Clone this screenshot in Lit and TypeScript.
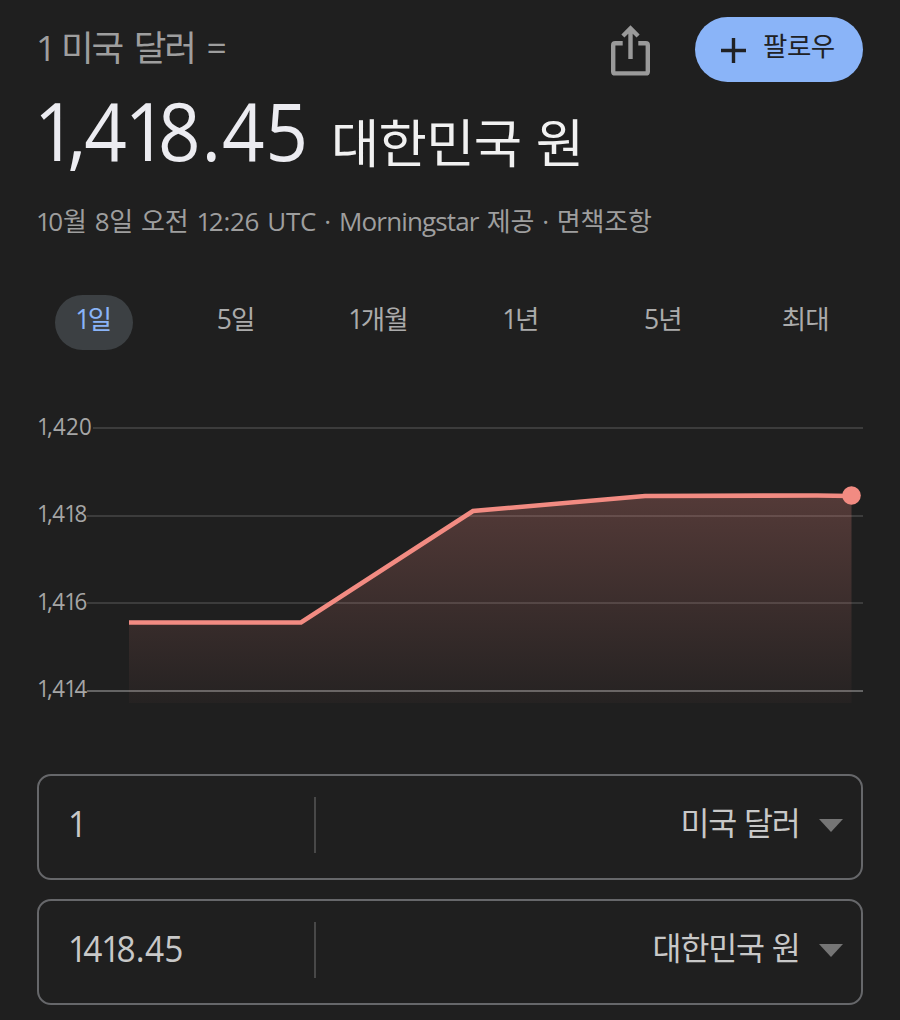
import { LitElement, html, css } from "lit";
import { customElement } from "lit/decorators.js";

/** Tightens each figure 1, and the character set directly before it. */
const fig = (s: string) =>
  s.split(/([0-9,](?=1)|1)/).filter((p) => p !== "").map((p) =>
    p === "1" ? html`<span class="one">1</span>` : /^[0-9,]$/.test(p) ? html`<span class="pre">${p}</span>` : p);

@customElement("app-root")
class AppRoot extends LitElement {
  static styles = css`
    :host {
      display: block;
      width: 900px;
      height: 1020px;
      box-sizing: border-box;
      padding: 17px 37px 0;
      overflow: hidden;
      background: #1f1f1f;
      color: #9e9e9e;
      font-family: "Open Sans", "Noto Sans CJK KR", sans-serif;
      white-space: nowrap;
    }
    .one { letter-spacing: -0.12em; }
    .pre { letter-spacing: -0.03em; }
    .top { display: flex; height: 65px; align-items: flex-start; }
    .from { flex: 1; font-size: 35.5px; line-height: 61px; letter-spacing: -2.3px; word-spacing: 5px; text-indent: -1px; }
    .from .one { letter-spacing: -0.2em; }
    .share { display: block; width: 40px; height: 54px; margin: 7px 45px 0 0; overflow: visible; }
    .follow {
      display: flex; box-sizing: border-box; width: 168.5px; height: 64.5px; border: 0; padding: 0 0 0 26.5px;
      border-radius: 33px; background: #8ab4f8; color: #202124;
      font: 26.5px/59px "Open Sans", "Noto Sans CJK KR", sans-serif; letter-spacing: -0.5px;
    }
    .follow svg { width: 25px; height: 25px; margin: 20.5px 17px 0 0; }
    .rate { height: 100px; display: flex; align-items: flex-start; color: #e8eaed; line-height: 96px; }
    .num { font-size: 80.5px; color: #ececf1; margin-left: -3px; width: 273px; letter-spacing: 1px; transform: scaleX(0.925); transform-origin: 0 0; }
    .num .one { letter-spacing: -0.125em; }
    .unit { font-size: 52.5px; line-height: 121px; margin-left: 24px; letter-spacing: -0.7px; word-spacing: 1.5px; color: #f1f1f1; }
    .meta { height: 50px; margin-top: 14px; font-size: 26px; line-height: 51px; letter-spacing: -0.25px; word-spacing: 1.6px; text-indent: -1px; }
    .meta .one { letter-spacing: -0.1em; }
    .src { letter-spacing: -0.85px; }
    .tabs { display: grid; grid-template-columns: repeat(6, 142.4px); margin: 48.5px -14.5px 0; height: 55.5px; }
    .tab { justify-self: center; box-sizing: border-box; width: 78px; text-align: center; font-size: 26.5px; line-height: 49px; letter-spacing: -0.9px; text-indent: -1px; color: #ababab; }
    .tab .one { letter-spacing: -0.1em; }
    .on { border-radius: 28px; background: #3c4043; color: #8ab4f8; height: 55.5px; }
    .chart { position: relative; height: 350px; margin-top: 51.5px; }
    .row { display: flex; height: 87.6px; font-size: 24px; line-height: 47px; color: #a6a6a6; letter-spacing: 0.2px; }
    .lab { transform: scaleX(0.93); transform-origin: 0 0; margin: 0 -4px 0 -0.5px; }
    .rule { flex: 1; height: 2px; margin: 25.5px 0 0 1.5px; background: #3c3c3c; }
    .row:last-of-type .rule { background: #646464; }
    .plot { position: absolute; left: 0; top: 0; width: 826px; height: 320px; overflow: visible; }
    .box {
      display: flex; box-sizing: border-box; height: 106px; border: 2px solid #66676a;
      border-radius: 14px; margin-bottom: 19px; color: #c8c8c8;
    }
    .val { width: 275px; box-sizing: border-box; padding-left: 29px; font-size: 36px; line-height: 96px; letter-spacing: 0.3px; }
    .fit { display: inline-block; transform: scaleX(0.93); transform-origin: 0 0; }
    .sep { width: 2px; height: 56px; margin-top: 21px; background: #484848; }
    .cur { flex: 1; text-align: right; font-size: 31.5px; line-height: 93px; letter-spacing: -1.2px; word-spacing: 1px; }
    .tri { width: 24px; height: 13px; margin: 43px 18px 0 19.5px; }
    .boxes { margin-top: 22.5px; }
  `;

  render() {
    return html`
      <div class="top">
        <div class="from">${fig("1 미국 달러 =")}</div>
        <svg class="share" viewBox="0 0 40 54" fill="none" stroke="#9a9a9a" stroke-width="4.4">
          <path d="M12.7 19.2H5.2Q3.2 19.2 3.2 21.2V47.4Q3.2 49.4 5.2 49.4H35.8Q37.8 49.4 37.8 47.4V21.2Q37.8 19.2 35.8 19.2H28.3" />
          <path d="M20.5 35V5M12.9 12L20.5 4.4L28.1 12" />
        </svg>
        <button class="follow">
          <svg viewBox="0 0 25 25"><path d="M12.5 0V25M0 12.5H25" stroke="#202124" stroke-width="3.4" /></svg>
          팔로우
        </button>
      </div>
      <div class="rate"><span class="num">${fig("1,418.45")}</span><span class="unit">대한민국 원</span></div>
      <div class="meta">${fig("10월 8일 오전 12:26 UTC · ")}<span class="src">Morningstar</span> 제공 · 면책조항</div>
      <div class="tabs">
        ${["1일", "5일", "1개월", "1년", "5년", "최대"].map(
          (t, i) => html`<div class="tab ${i === 0 ? "on" : ""}">${fig(t)}</div>`
        )}
      </div>
      <div class="chart">
        ${["1,420", "1,418", "1,416", "1,414"].map(
          (t) => html`<div class="row"><span class="lab">${fig(t)}</span><div class="rule"></div></div>`
        )}
        <svg class="plot" viewBox="37 402.5 826 320">
          <defs>
            <linearGradient id="g" x1="0" y1="496" x2="0" y2="703" gradientUnits="userSpaceOnUse">
              <stop offset="0" stop-color="#f28b82" stop-opacity="0.25" />
              <stop offset="1" stop-color="#f28b82" stop-opacity="0.03" />
            </linearGradient>
          </defs>
          <path d="M129 623H301L473 511.5L645 496.5L817 496L851.5 496.5V703.5H129Z" fill="url(#g)" />
          <path d="M129 623H301L473 511.5L645 496.5L817 496L851.5 496.5" fill="none" stroke="#f28b82" stroke-width="4.6" />
          <circle cx="851.5" cy="496" r="9.3" fill="#f28b82" />
        </svg>
      </div>
      <div class="boxes">
        ${[["1", "미국 달러"], ["1418.45", "대한민국 원"]].map(
          ([v, c]) => html`<div class="box">
            <div class="val"><span class="fit">${fig(v)}</span></div>
            <div class="sep"></div>
            <div class="cur">${c}</div>
            <svg class="tri" viewBox="0 0 24 13"><path d="M0 0H24L12 13Z" fill="#757575" /></svg>
          </div>`
        )}
      </div>
    `;
  }
}
